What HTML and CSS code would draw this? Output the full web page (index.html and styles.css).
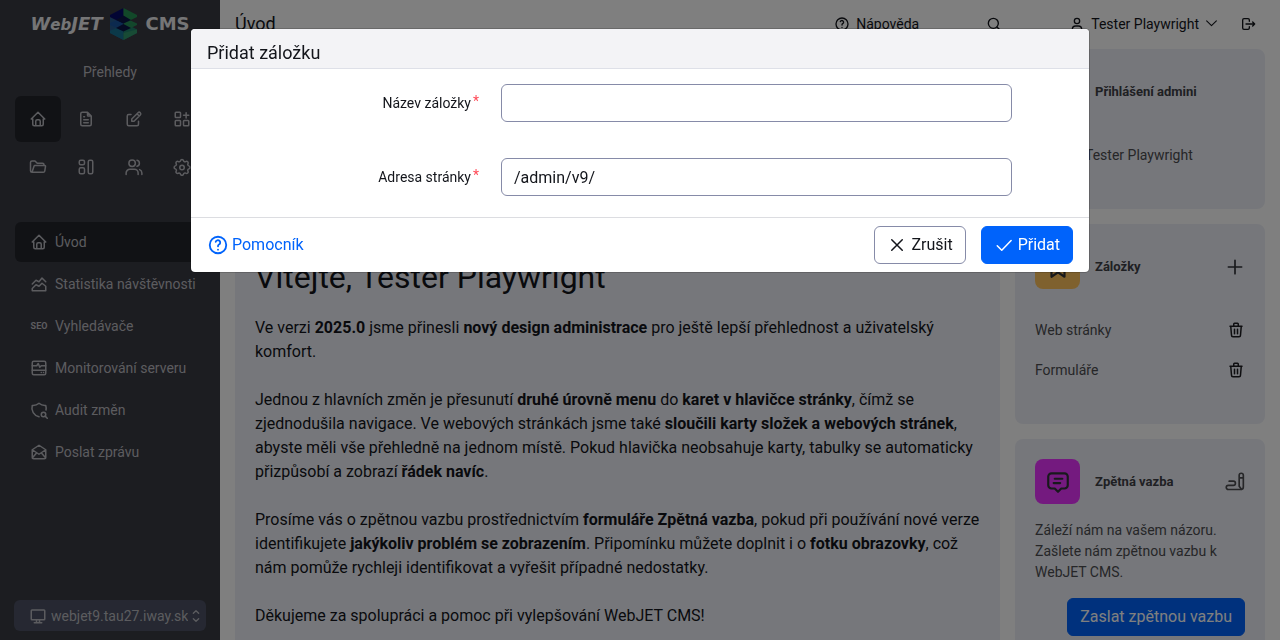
FILE: index.html
```html
<!DOCTYPE html>
<html lang="cs">
<head>
<meta charset="utf-8">
<meta name="viewport" content="width=device-width, initial-scale=1">
<title>WebJET CMS</title>
<link rel="stylesheet" href="styles.css">
</head>
<body>
<div class="app">
  <aside class="sidebar">
    <a class="logo" href="#" aria-label="WebJET CMS">
      <span class="logo-word logo-italic">W<small>eb</small>JET</span>
      <svg class="logo-mark" viewBox="0 0 27 32">
        <path fill="#245f98" d="M0 9l13.500 7v16L0 25z"/>
        <path fill="#1d8a70" d="M13.500 20l6-2.500L27 21.500V25l-13.500 7z"/>
        <path fill="#147a9c" d="M0 23l13.500-6v15L0 25z"/>
        <path fill="#30a070" d="M13.500 25L27 21.500V25l-13.500 7z"/>
        <path fill="#1658a8" d="M0 15l13.500-6v14L0 17z"/>
        <path fill="#26985c" d="M13.500 15l7-2.500 6.500 3v1.500l-13.500 6.500z"/>
        <path fill="#00066e" d="M0 7l13.500-7v15.500L0 9z"/>
        <path fill="#239a55" d="M13.500 0L27 7v2l-13.500 6.500z"/>
        <path fill="#061448" d="M6 12l7.500-4.500 7.500 4.500-7.500 3.500zM6 20l7.500-4 7.500 4-7.500 3.500z"/>
      </svg>
      <span class="logo-word">CMS</span>
    </a>
    <p class="section-name">Přehledy</p>
    <nav class="modules" aria-label="Moduly">
      <a class="module active" href="#" aria-label="Přehledy"><svg class="icon"><use href="#i-home"/></svg></a>
      <a class="module" href="#" aria-label="Web stránky"><svg class="icon" viewBox="0 0 24 24"><path d="M14 3v4a1 1 0 0 0 1 1h4M17 21H7a2 2 0 0 1-2-2V5a2 2 0 0 1 2-2h7l5 5v11a2 2 0 0 1-2 2zM9 9h1M9 13h6M9 17h6"/></svg></a>
      <a class="module" href="#" aria-label="Příspěvky"><svg class="icon" viewBox="0 0 24 24"><path d="M8 6H5a2 2 0 0 0-2 2v11a2 2 0 0 0 2 2h11a2 2 0 0 0 2-2v-4M20.400 6.600a2.100 2.100 0 0 0-3-3L9 12v3h3zM16 5l3 3"/></svg></a>
      <a class="module" href="#" aria-label="Aplikace"><svg class="icon" viewBox="0 0 24 24"><rect x="3" y="3" width="7" height="7" rx="1"/><rect x="3" y="14" width="7" height="7" rx="1"/><rect x="14" y="14" width="7" height="7" rx="1"/><path d="M14 7h7M17.500 3.500v7"/></svg></a>
      <a class="module" href="#" aria-label="Soubory"><svg class="icon" viewBox="0 0 24 24"><path d="M4 19l2.800-8.400a1 1 0 0 1 .9-.6H21a1 1 0 0 1 1 1.200l-1 6.200a2 2 0 0 1-2 1.600H4a2 2 0 0 1-2-2V6a2 2 0 0 1 2-2h4l3 3h7a2 2 0 0 1 2 2v1"/></svg></a>
      <a class="module" href="#" aria-label="Šablony"><svg class="icon" viewBox="0 0 24 24"><rect x="3" y="3" width="7" height="6" rx="2"/><rect x="3" y="13" width="7" height="8" rx="2"/><rect x="15" y="3" width="6" height="18" rx="2"/></svg></a>
      <a class="module" href="#" aria-label="Uživatelé"><svg class="icon" viewBox="0 0 24 24"><circle cx="9.500" cy="7" r="4.300"/><path d="M1.500 22v-2a5 5 0 0 1 5-5h6a5 5 0 0 1 5 5v2M16 3a4.100 4.100 0 0 1 0 8M22.500 22v-2a5 5 0 0 0-3-4.500"/></svg></a>
      <a class="module" href="#" aria-label="Nastavení"><svg class="icon" viewBox="0 0 24 24"><path d="M10 3.600c.5-2.100 3.500-2.100 4 0a2 2 0 0 0 3 1.200c1.900-1.100 4 1 2.900 2.900a2 2 0 0 0 1.200 2.800c2.100.5 2.100 3.500 0 4a2 2 0 0 0-1.200 2.900c1.100 1.900-1 4-2.900 2.900a2 2 0 0 0-3 1.200c-.5 2.100-3.500 2.100-4 0a2 2 0 0 0-2.800-1.200c-1.900 1.100-4-1-2.900-2.900a2 2 0 0 0-1.200-2.900c-2.100-.5-2.100-3.500 0-4a2 2 0 0 0 1.200-2.800c-1.100-1.900 1-4 2.900-2.900A2 2 0 0 0 10 3.600z"/><circle cx="12" cy="12.500" r="3"/></svg></a>
    </nav>
    <nav class="menu" aria-label="Přehledy">
      <a class="menu-item active" href="#"><svg class="icon"><use href="#i-home"/></svg>Úvod</a>
      <a class="menu-item" href="#"><svg class="icon" viewBox="0 0 24 24"><path d="M3 21v-3l5-5 4 2 4-4 5 4v6zM3 12l5-5 4 2 4-5 5 5"/></svg>Statistika návštěvnosti</a>
      <a class="menu-item" href="#"><span class="seo">SEO</span>Vyhledávače</a>
      <a class="menu-item" href="#"><svg class="icon" viewBox="0 0 24 24"><rect x="3" y="3" width="18" height="18" rx="2"/><path d="M3 9h6l2-3 2 5 2-2h6M3 15h18M15 18h.1M18 18h.1"/></svg>Monitorování serveru</a>
      <a class="menu-item" href="#"><svg class="icon" viewBox="0 0 24 24"><path d="M12 21A12 12 0 0 1 3 6a12 12 0 0 0 9-3 12 12 0 0 0 9 3c.6 2 .7 4.200.3 6"/><circle cx="18" cy="18" r="3"/><path d="M20.200 20.200L23 23"/></svg>Audit změn</a>
      <a class="menu-item" href="#"><svg class="icon" viewBox="0 0 24 24"><path d="M3 9l9 6 9-6-9-6zM21 9v10a2 2 0 0 1-2 2H5a2 2 0 0 1-2-2V9M3 20l6-7M15 13l6 7"/></svg>Poslat zprávu</a>
    </nav>
    <label class="domain">
      <svg class="icon" viewBox="0 0 24 24"><rect x="3" y="4" width="18" height="13" rx="1"/><path d="M7 21h10M10 17v4M14 17v4"/></svg>
      <select class="domain-select" aria-label="Doména"><option>webjet9.tau27.iway.sk</option></select>
      <svg class="icon selector" viewBox="0 0 12 24"><path d="M2 8l4-4 4 4M2 16l4 4 4-4"/></svg>
    </label>
  </aside>

  <div class="page">
    <header class="topbar">
      <h1 class="page-title">Úvod</h1>
      <nav class="tools" aria-label="Nástroje">
        <a class="tool" href="#"><svg class="icon"><use href="#i-help"/></svg>Nápověda</a>
        <a class="tool" href="#" aria-label="Hledat"><svg class="icon" viewBox="0 0 24 24"><circle cx="11" cy="11" r="7.500"/><path d="M16.500 16.500L21 21"/></svg></a>
        <span class="account">
          <a class="tool" href="#"><svg class="icon" viewBox="0 0 24 24"><circle cx="12" cy="7.500" r="4"/><path d="M5 21v-1a5 5 0 0 1 5-5h4a5 5 0 0 1 5 5v1"/></svg>Tester Playwright<svg class="icon chevron" viewBox="0 0 24 24"><path d="M3 7l9 9 9-9"/></svg></a>
          <a class="tool" href="#" aria-label="Odhlásit"><svg class="icon" viewBox="0 0 24 24"><path d="M14 8V6a2 2 0 0 0-2-2H6a2 2 0 0 0-2 2v12a2 2 0 0 0 2 2h6a2 2 0 0 0 2-2v-2M9 12h13M19 9l3 3-3 3"/></svg></a>
        </span>
      </nav>
    </header>
    <div class="columns">
      <main class="card welcome">
        <h2 class="welcome-title">Vítejte, Tester Playwright</h2>
        <p>Ve verzi <b>2025.0</b> jsme přinesli <b>nový design administrace</b> pro ještě lepší přehlednost a uživatelský<br>komfort.</p>
        <p>Jednou z hlavních změn je přesunutí <b>druhé úrovně menu</b> do <b>karet v hlavičce stránky</b>, čímž se<br>zjednodušila navigace. Ve webových stránkách jsme také <b>sloučili karty složek a webových stránek</b>,<br>abyste měli vše přehledně na jednom místě. Pokud hlavička neobsahuje karty, tabulky se automaticky<br>přizpůsobí a zobrazí <b>řádek navíc</b>.</p>
        <p>Prosíme vás o zpětnou vazbu prostřednictvím <b>formuláře Zpětná vazba</b>, pokud při používání nové verze<br>identifikujete <b>jakýkoliv problém se zobrazením</b>. Připomínku můžete doplnit i o <b>fotku obrazovky</b>, což<br>nám pomůže rychleji identifikovat a vyřešit případné nedostatky.</p>
        <p>Děkujeme za spolupráci a pomoc při vylepšování WebJET CMS!</p>
      </main>
      <div class="widgets">
        <section class="card widget">
          <div class="widget-head"><span class="badge"></span><h3>Přihlášení admini</h3></div>
          <p class="row admin">Tester Playwright</p>
        </section>
        <section class="card widget bookmarks">
          <div class="widget-head">
            <span class="badge yellow"><svg class="icon" viewBox="0 0 24 24"><path d="M12 17l-6 4V5a2 2 0 0 1 2-2h8a2 2 0 0 1 2 2v16z"/></svg></span>
            <h3>Záložky</h3>
            <button class="icon-button" aria-label="Přidat záložku"><svg class="icon" viewBox="0 0 24 24"><path d="M12 4v16M4 12h16"/></svg></button>
          </div>
          <p class="row"><a href="#">Web stránky</a><button class="icon-button trash" aria-label="Smazat"><svg class="icon"><use href="#i-trash"/></svg></button></p>
          <p class="row"><a href="#">Formuláře</a><button class="icon-button trash" aria-label="Smazat"><svg class="icon"><use href="#i-trash"/></svg></button></p>
        </section>
        <section class="card widget">
          <div class="widget-head">
            <span class="badge purple"><svg class="icon" viewBox="0 0 24 24"><path d="M9 18H6a3 3 0 0 1-3-3V7a3 3 0 0 1 3-3h12a3 3 0 0 1 3 3v8a3 3 0 0 1-3 3h-3l-3 3zM9 9h7M8 13h6"/></svg></span>
            <h3>Zpětná vazba</h3>
            <svg class="icon scribble" viewBox="0 0 24 24"><path d="M5 11h5a2.500 2.500 0 0 1 0 5H4a2.500 2.500 0 0 0 0 5h15a3 3 0 0 0 3-3V4a2.500 2.500 0 0 0-5 0v13l3 4M17 7h5"/></svg>
          </div>
          <p class="feedback">Záleží nám na vašem názoru.<br>Zašlete nám zpětnou vazbu k<br>WebJET CMS.</p>
          <button class="button primary send">Zaslat zpětnou vazbu</button>
        </section>
      </div>
    </div>
  </div>
</div>

<div class="backdrop">
  <form class="modal" role="dialog" aria-modal="true" aria-labelledby="modal-title">
    <div class="modal-head"><h2 id="modal-title">Přidat záložku</h2></div>
    <div class="modal-body">
      <label for="name">Název záložky<sup>*</sup></label>
      <input id="name" type="text">
      <label for="url">Adresa stránky<sup>*</sup></label>
      <input id="url" type="text" value="/admin/v9/">
    </div>
    <div class="modal-foot">
      <a class="helper" href="#"><svg class="icon"><use href="#i-help"/></svg>Pomocník</a>
      <button type="button" class="button"><svg class="icon" viewBox="0 0 24 24"><path d="M5 5l14 14M19 5L5 19"/></svg>Zrušit</button>
      <button type="button" class="button primary"><svg class="icon" viewBox="0 0 24 24"><path d="M3 13l6 6L21.500 6"/></svg>Přidat</button>
    </div>
  </form>
</div>

<svg class="sprite" aria-hidden="true">
  <symbol id="i-home" viewBox="0 0 24 24"><path d="M5 12H3l9-9 9 9h-2M5 12v7a2 2 0 0 0 2 2h10a2 2 0 0 0 2-2v-7M9 21v-6a2 2 0 0 1 2-2h2a2 2 0 0 1 2 2v6"/></symbol>
  <symbol id="i-help" viewBox="0 0 24 24"><circle cx="12" cy="12" r="9"/><path d="M12 17v.1M12 13.500a2 2 0 0 1 1-2 2.500 2.500 0 1 0-3.500-3"/></symbol>
  <symbol id="i-trash" viewBox="0 0 24 24"><path d="M4 7h16M10 11v6M14 11v6M5 7l1 12a2 2 0 0 0 2 2h8a2 2 0 0 0 2-2l1-12M9 7V4a1 1 0 0 1 1-1h4a1 1 0 0 1 1 1v3"/></symbol>
</svg>
</body>
</html>
```
FILE: styles.css
```css
* { box-sizing: border-box; }

body {
  margin: 0;
  font: 16px/24px Roboto, "Noto Sans", sans-serif;
  color: #13151b;
  background: #fff;
}

h1, h2, h3, p { margin: 0; font-weight: 400; }
a { color: inherit; text-decoration: none; }
button, input, select { font: inherit; color: inherit; }

.sprite { position: absolute; width: 0; height: 0; }

.icon {
  width: 18px;
  height: 18px;
  flex: none;
  fill: none;
  stroke: currentColor;
  stroke-width: 2;
  stroke-linecap: round;
  stroke-linejoin: round;
}

.app { display: flex; height: 100vh; overflow: hidden; }

/* Sidebar */
.sidebar {
  display: flex;
  flex-direction: column;
  flex: none;
  width: 220px;
  padding: 8px 15px 9px;
  font-size: 14px;
  color: #b8b9bf;
  background: #383a43;
}

.logo { display: flex; align-items: center; justify-content: center; gap: 8px; height: 32px; color: #fff; opacity: .9; }
.logo-mark { width: 27px; height: 32px; }
.logo-word { font: 700 18px/32px "DejaVu Sans", sans-serif; }
.logo-italic { font-style: oblique; }
.logo-word small { font-size: 15px; }

.section-name { margin-top: 20px; text-align: center; }

.modules { display: grid; grid-template-columns: repeat(4, 46px); gap: 2px; margin-top: 12px; }
.module { display: flex; align-items: center; justify-content: center; height: 46px; border-radius: 6px; }
.module.active, .menu-item.active { background: #23252b; }

.menu { display: grid; gap: 2px; margin-top: 32px; }
.menu-item { display: flex; align-items: center; gap: 7px; height: 40px; padding-left: 15px; border-radius: 6px; white-space: nowrap; }
.seo { width: 18px; font: 700 9px/18px Roboto, sans-serif; text-align: center; }

.domain { display: flex; align-items: center; gap: 4px; height: 31px; margin: auto -1px 0; padding: 0 6px 0 15px; border-radius: 6px; background: #4c5164; }
.domain-select { flex: 1; min-width: 0; padding: 0; border: 0; appearance: none; background: none; }
.domain .selector { width: 8px; height: 16px; }

/* Page */
.page { display: flex; flex: 1; flex-direction: column; min-width: 0; }
.topbar { display: flex; align-items: center; flex: none; height: 49px; padding: 0 24px 2px 15px; }
.page-title { font-size: 18px; }
.tools { display: flex; gap: 67px; margin-left: auto; font-size: 14px; }
.tool { display: flex; align-items: center; gap: 6px; }
.tool .icon { width: 16px; height: 16px; }
.tool .chevron { width: 13px; height: 13px; }
.account { display: flex; gap: 22px; }

.columns { display: grid; grid-template-columns: minmax(0, 1fr) 250px; gap: 15px; padding: 0 15px; }
.card { border-radius: 8px; background: #edeff6; }
.welcome { padding: 209px 20px 20px; }
.welcome p { margin-bottom: 24px; }
.welcome-title { margin-bottom: 20px; font-size: 32px; line-height: 38px; }

.widgets { display: grid; gap: 15px; align-content: start; font-size: 14px; color: #4c4d51; }
.widget { min-height: 160px; padding: 20px; }
.bookmarks { min-height: 200px; }
.widget-head { display: flex; align-items: center; gap: 15px; margin-bottom: 21px; }
.widget-head h3 { flex: 1; font-size: 13px; font-weight: 700; color: #3f4147; }
.badge { display: flex; align-items: center; justify-content: center; width: 45px; height: 45px; border-radius: 8px; color: #303238; }
.badge .icon { width: 26px; height: 26px; }
.yellow { background: #ffc25c; }
.purple { background: #e835ff; }
.row { display: flex; align-items: center; justify-content: space-between; height: 40px; }
.admin { padding-left: 50px; }
.icon-button { display: flex; padding: 0; border: 0; background: none; color: #303238; }
.icon-button .icon { width: 20px; height: 20px; }
.trash { color: #1c1d21; }
.icon-button.trash .icon { width: 18px; height: 18px; }
.scribble { width: 20px; height: 20px; }
.feedback { margin: -5px 0 15px; line-height: 21px; }

/* Controls */
.button {
  display: flex;
  align-items: center;
  gap: 5px;
  height: 38px;
  padding: 0 12px;
  border: 1px solid #868ba8;
  border-radius: 6px;
  font-size: 16px;
  background: #fff;
}
.primary { border-color: #0063fb; color: #fff; background: #0063fb; }
.send { margin-left: auto; }

/* Dialog */
.backdrop { position: fixed; inset: 0; padding: 28px 0; background: rgba(0, 0, 0, .5); }
.modal {
  width: min(900px, 100%);
  margin: 0 auto;
  border: 1px solid rgba(0, 0, 0, .175);
  border-radius: 5px;
  background: #fff;
  background-clip: padding-box;
}
.modal-head { height: 40px; padding: 8px 16px; border-bottom: 1px solid #dee0e8; border-radius: 4px 4px 0 0; background: #f3f3f6; }
.modal-head h2 { font-size: 18px; line-height: 32px; }
.modal-body {
  display: grid;
  grid-template-columns: 272px minmax(0, 1fr);
  column-gap: 22px;
  row-gap: 36px;
  align-items: center;
  padding: 15px 77px 21px 16px;
}
.modal-body label { text-align: right; font-size: 14px; }
.modal-body sup { margin-left: 2px; font-size: 14px; line-height: 0; vertical-align: 2px; color: #ff4b58; }
.modal-body input { width: 100%; height: 38px; padding: 0 12px; border: 1px solid #868ba8; border-radius: 6px; background: #fff; }
.modal-foot { display: flex; align-items: center; gap: 15px; padding: 8px 16px; border-top: 1px solid #dcdde1; }
.modal-foot .button { padding-left: 13px; }
.helper { display: flex; align-items: center; gap: 3px; margin-right: auto; color: #0063fb; }
.helper .icon { width: 22px; height: 22px; }
```
